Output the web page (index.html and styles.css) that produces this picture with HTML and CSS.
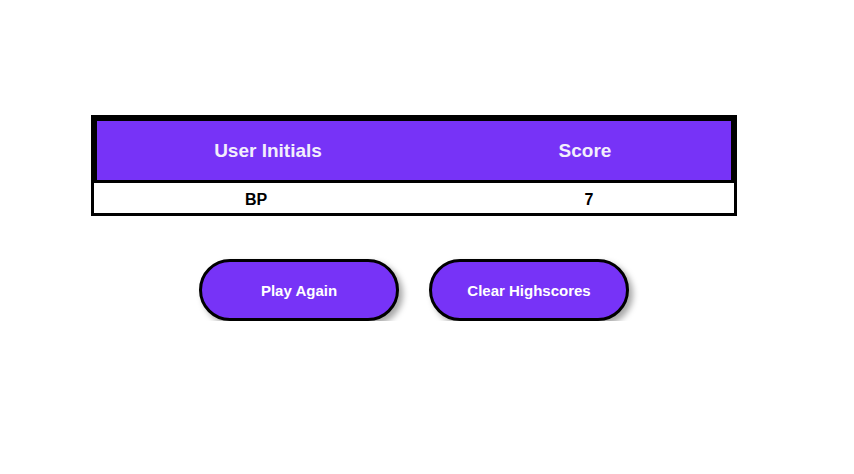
FILE: index.html
```html
<!DOCTYPE html>
<html>
<head>
<meta charset="utf-8">
<link rel="stylesheet" href="styles.css">
</head>
<body>
<main class="page">
  <table class="scores">
    <thead>
      <tr>
        <th class="col-initials">User Initials</th>
        <th class="col-score">Score</th>
      </tr>
    </thead>
    <tbody>
      <tr>
        <td class="cell-initials">BP</td>
        <td class="cell-score">7</td>
      </tr>
    </tbody>
  </table>
  <div class="actions">
    <button class="btn">Play Again</button>
    <button class="btn">Clear Highscores</button>
  </div>
</main>
</body>
</html>
```
FILE: styles.css
```css
html, body {
  margin: 0;
  padding: 0;
  background: #fff;
}
.page {
  width: 828px;
  padding-top: 115px;
  display: flex;
  flex-direction: column;
  align-items: center;
  font-family: "Liberation Sans", Arial, sans-serif;
}
.scores {
  width: 646px;
  border: 3px solid #000;
  border-collapse: separate;
  border-spacing: 0;
}
.scores th {
  background: #7733f7;
  color: #f2eefc;
  font-size: 19px;
  font-weight: bold;
  height: 59px;
  padding: 0;
  border-top: 3px solid #000;
  border-bottom: 3px solid #000;
}
.col-initials {
  width: 342px;
  border-left: 3px solid #000;
}
.col-score {
  border-right: 3px solid #000;
}
.scores td {
  height: 26px;
  padding: 4px 0 0 0;
  text-align: center;
  font-size: 16px;
  font-weight: bold;
  color: #000;
}
.scores .cell-initials {
  padding-right: 21px;
}
.scores .cell-score {
  padding-left: 5px;
}
.actions {
  display: flex;
  gap: 30px;
  margin-top: 43px;
}
.btn {
  width: 200px;
  height: 62px;
  border: 3px solid #000;
  border-radius: 31px;
  background: #7733f7;
  color: #fff;
  font-family: "Liberation Sans", Arial, sans-serif;
  font-size: 15px;
  font-weight: bold;
  padding: 0;
  box-shadow: 4px 4px 6px rgba(0, 0, 0, 0.35);
  cursor: pointer;
}
```
